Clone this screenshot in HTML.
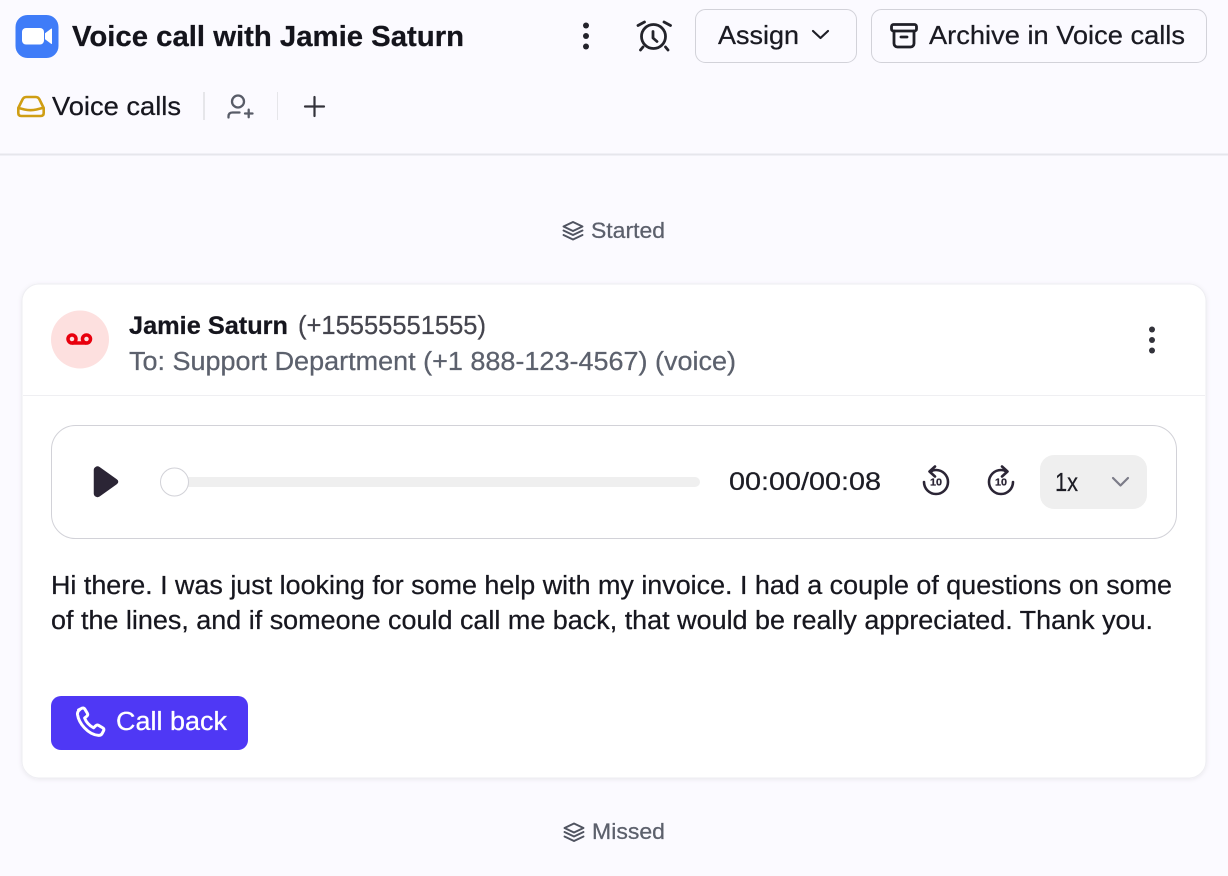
<!DOCTYPE html>
<html lang="en">
<head>
<meta charset="utf-8">
<title>Voice call with Jamie Saturn</title>
<style>
html,body{margin:0;padding:0;background:#fbfaff;}
svg{display:block;}
text{font-family:"Liberation Sans",sans-serif;white-space:pre;fill:currentColor;stroke:currentColor;stroke-width:.25;}
</style>
</head>
<body>
<svg xmlns="http://www.w3.org/2000/svg" width="1228" height="876" viewBox="0 0 1228 876">
<defs>
<filter id="s" x="-5%" y="-5%" width="110%" height="110%"><feDropShadow dx="0" dy="1" stdDeviation="2.5" flood-color="#000" flood-opacity=".07"/></filter>
</defs>
<rect width="1228" height="876" fill="#fbfaff"/>

<!-- Zoom logo -->
<rect x="15.500" y="15" width="43" height="43" rx="12" fill="#3f7cf8"/>
<rect x="22" y="28" width="22" height="16.500" rx="4" fill="#fff"/>
<path d="M45.500 33.500l6-4.500v14.500l-6-4.500z" fill="#fff" stroke="#fff" stroke-linejoin="round"/>
<text x="72" y="46" font-size="29" font-weight="700" style="color:#14141c" textLength="392" lengthAdjust="spacingAndGlyphs">Voice call with Jamie Saturn</text>

<!-- kebab -->
<g fill="#23232b"><circle cx="586" cy="25.500" r="3"/><circle cx="586" cy="36" r="3"/><circle cx="586" cy="46.500" r="3"/></g>

<!-- alarm -->
<g fill="none" stroke="#23232b" stroke-width="2.800" stroke-linecap="round" stroke-linejoin="round">
<circle cx="653.500" cy="36.500" r="12"/>
<path d="M653 31.500v6.500l4 3.500"/>
<path d="M638 25.500l6.500-3.500M670.500 25.500l-6.500-3.500M643 47l-2.500 3M665.500 47l2.500 3"/>
</g>

<!-- Assign -->
<rect x="695.500" y="9.500" width="161" height="53" rx="10" fill="#fbfaff" stroke="#d2d2d9"/>
<text x="718" y="44" font-size="26" style="color:#1a1a22" textLength="81" lengthAdjust="spacingAndGlyphs">Assign</text>
<path d="M813 31l7.500 7 7.500-7" fill="none" stroke="#1f1f27" stroke-width="2.200" stroke-linecap="round" stroke-linejoin="round"/>

<!-- Archive -->
<rect x="871.500" y="9.500" width="335" height="53" rx="10" fill="#fbfaff" stroke="#d2d2d9"/>
<g fill="none" stroke="#1f1f27" stroke-width="2.800" stroke-linejoin="round" stroke-linecap="round">
<rect x="891.500" y="24.500" width="25" height="6.500" rx="2"/>
<path d="M894 31v12.500a3.500 3.500 0 0 0 3.500 3.500h13a3.500 3.500 0 0 0 3.500-3.500v-12.500"/>
<path d="M901 37h6"/>
</g>
<text x="929" y="44" font-size="26" style="color:#1a1a22" textLength="256" lengthAdjust="spacingAndGlyphs">Archive in Voice calls</text>

<!-- Tab row -->
<g fill="none" stroke="#cf9e14" stroke-width="2.600" stroke-linejoin="round" stroke-linecap="round">
<path d="M18.300 108l4.200-8.500q1.200-2.500 3.800-2.500h9.400q2.600 0 3.800 2.500l4.200 8.500v5q0 3-3 3h-19.400q-3 0-3-3z"/>
<path d="M18.500 108l6 1.500q6 1.300 12 0l6-1.500"/>
</g>
<text x="52" y="115" font-size="26" style="color:#17171f" textLength="129" lengthAdjust="spacingAndGlyphs">Voice calls</text>
<rect x="203" y="92" width="2" height="28" fill="#e6e6ea"/>
<g fill="none" stroke="#585c68" stroke-width="2.300" stroke-linecap="round">
<circle cx="238" cy="101.500" r="6"/>
<path d="M228.500 117.500v-1q0-4 4-4h7"/>
<path d="M245 113.500h7.500M248.700 109.700v7.500"/>
</g>
<rect x="277" y="92" width="1" height="28" fill="#e6e6ea"/>
<path d="M305 106.500h19M314.500 97v19" fill="none" stroke="#33333b" stroke-width="2.200" stroke-linecap="round"/>
<rect x="0" y="153.500" width="1228" height="2" fill="#e6e6ec"/>

<!-- Started -->
<g fill="none" stroke="#4f5360" stroke-width="1.900" stroke-linejoin="round" stroke-linecap="round">
<path d="M573 222l9.500 4.500-9.500 4.500-9.500-4.500z"/>
<path d="M563.500 230.500l9.500 4.500 9.500-4.500"/>
<path d="M563.500 235l9.500 4.500 9.500-4.500"/>
</g>
<text x="591" y="238" font-size="22.500" style="color:#5c606c" textLength="74" lengthAdjust="spacingAndGlyphs">Started</text>

<!-- Card -->
<rect x="22" y="284" width="1184" height="494" rx="17" fill="#fff" stroke="#eeeef2" filter="url(#s)"/>
<circle cx="80" cy="339.500" r="29" fill="#fde0df"/>
<g fill="none" stroke="#e8000d" stroke-width="3.500">
<circle cx="72" cy="339" r="4"/>
<circle cx="86.500" cy="339" r="4"/>
<path d="M72 343h14.500"/>
</g>
<text x="129" y="334" font-size="25" font-weight="700" style="color:#15151d" textLength="159" lengthAdjust="spacingAndGlyphs">Jamie Saturn</text>
<text x="298" y="334" font-size="25.500" style="color:#45454e" textLength="188" lengthAdjust="spacingAndGlyphs">(+15555551555)</text>
<text x="129" y="370" font-size="25.500" style="color:#5c616d" textLength="607" lengthAdjust="spacingAndGlyphs">To: Support Department (+1 888-123-4567) (voice)</text>
<g fill="#33333b"><circle cx="1152" cy="329.500" r="3"/><circle cx="1152" cy="340" r="3"/><circle cx="1152" cy="350.500" r="3"/></g>
<rect x="23" y="395" width="1182" height="1" fill="#efeff2"/>

<!-- Player -->
<rect x="51.500" y="425.500" width="1125" height="113" rx="24" fill="#fff" stroke="#d2d2d8"/>
<path d="M94.500 470a3 3 0 0 1 4.500-2.500l17.500 12.500a2 2 0 0 1 0 3.500l-17.500 12.500a3 3 0 0 1-4.500-2.500z" fill="#2b2535" stroke="#2b2535" stroke-width="1.500" stroke-linejoin="round"/>
<rect x="175" y="477" width="525" height="10" rx="5" fill="#efefef"/>
<circle cx="174.500" cy="482" r="14" fill="#fff" stroke="#d2d2d8"/>
<text x="729" y="490" font-size="25" style="color:#1d1d25" textLength="152" lengthAdjust="spacingAndGlyphs">00:00/00:08</text>

<!-- Skip icons -->
<g fill="none" stroke="#2b2535" stroke-width="2.600" stroke-linecap="round" stroke-linejoin="round">
<path d="M931 471.500q2-1.500 5-1.500a12 12 0 1 1-12 12"/>
<path d="M935 466.500l-5.500 5 5.500 5"/>
<g transform="translate(1937 0) scale(-1 1)">
<path d="M931 471.500q2-1.500 5-1.500a12 12 0 1 1-12 12"/>
<path d="M935 466.500l-5.500 5 5.500 5"/>
</g>
</g>
<text x="930" y="485.500" font-size="10" font-weight="700" style="color:#2b2535" textLength="12" lengthAdjust="spacingAndGlyphs">10</text>
<text x="995" y="485.500" font-size="10" font-weight="700" style="color:#2b2535" textLength="12" lengthAdjust="spacingAndGlyphs">10</text>

<!-- Speed -->
<rect x="1040" y="455" width="107" height="54" rx="14" fill="#efefef"/>
<text x="1055" y="491" font-size="26" style="color:#1d1d25" textLength="23" lengthAdjust="spacingAndGlyphs">1x</text>
<path d="M1113 478l7.500 7.500 7.500-7.500" fill="none" stroke="#7c7c88" stroke-width="2.200" stroke-linecap="round" stroke-linejoin="round"/>

<!-- Message -->
<text x="51" y="594" font-size="25.500" style="color:#17171f" textLength="1121" lengthAdjust="spacingAndGlyphs">Hi there. I was just looking for some help with my invoice. I had a couple of questions on some</text>
<text x="51" y="629" font-size="25.500" style="color:#17171f" textLength="1102" lengthAdjust="spacingAndGlyphs">of the lines, and if someone could call me back, that would be really appreciated. Thank you.</text>

<!-- Call back -->
<rect x="51" y="696" width="197" height="54" rx="10" fill="#4f38f5"/>
<path transform="translate(0 1.500)" d="M78.500 708.500l3.500-1.800q1.800-.7 2.800.9l2.600 4.300q.8 1.500-.5 2.700l-2.300 1.900q2.500 6.500 9 9.800l2.300-2.200q1.200-1 2.600-.3l4.300 2.600q1.600 1 .8 2.800l-1.500 2.900q-1 1.900-3.600 1.800-7.500-.5-14-7.500-6-6.500-7-13.500-.3-2.600 2-4.400z" fill="none" stroke="#fff" stroke-width="3" stroke-linejoin="round"/>
<text x="116" y="730" font-size="25.500" style="color:#fff" textLength="111" lengthAdjust="spacingAndGlyphs">Call back</text>

<!-- Missed -->
<g fill="none" stroke="#4f5360" stroke-width="1.900" stroke-linejoin="round" stroke-linecap="round">
<path d="M574 823.500l9.500 4.500-9.500 4.500-9.500-4.500z"/>
<path d="M564.500 832l9.500 4.500 9.500-4.500"/>
<path d="M564.500 836.500l9.500 4.500 9.500-4.500"/>
</g>
<text x="592" y="839" font-size="22.500" style="color:#5c606c" textLength="73" lengthAdjust="spacingAndGlyphs">Missed</text>
</svg>
</body>
</html>
